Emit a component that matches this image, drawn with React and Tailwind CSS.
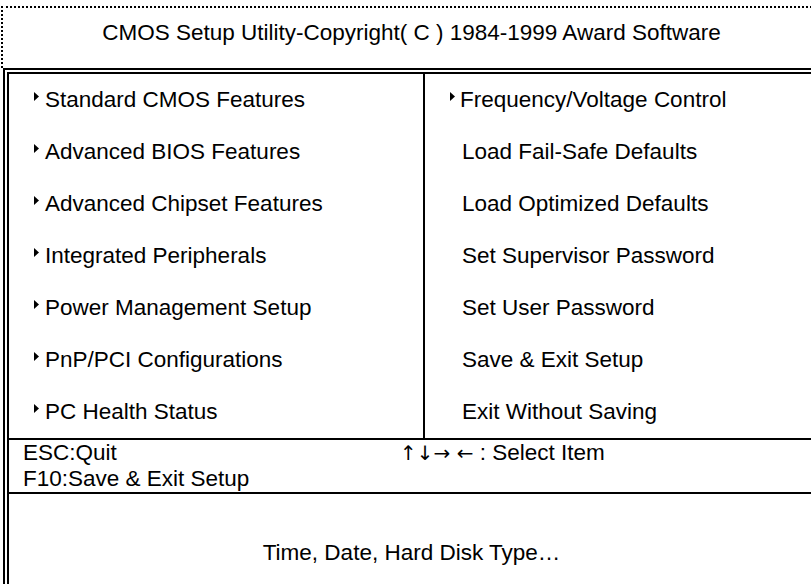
// BIOS setup main menu (Award CMOS Setup Utility)

const leftItems = [
  'Standard CMOS Features',
  'Advanced BIOS Features',
  'Advanced Chipset Features',
  'Integrated Peripherals',
  'Power Management Setup',
  'PnP/PCI Configurations',
  'PC Health Status',
];

const rightItems = [
  { label: 'Frequency/Voltage Control', sub: true },
  { label: 'Load Fail-Safe Defaults' },
  { label: 'Load Optimized Defaults' },
  { label: 'Set Supervisor Password' },
  { label: 'Set User Password' },
  { label: 'Save & Exit Setup' },
  { label: 'Exit Without Saving' },
];

// 小さな右向き三角（サブメニューあり）
function Pointer() {
  return (
    <svg width="5" height="9" viewBox="0 0 5 9" className="shrink-0 mb-[7px]">
      <polygon points="0,0 5,4.5 0,9" fill="#000" />
    </svg>
  );
}

export default function App() {
  return (
    <div
      className="w-[820px] pt-[6px] pl-[1px] bg-white text-black text-[22.5px]"
      style={{ fontFamily: '"Liberation Sans", Arial, sans-serif' }}
    >
      {/* タイトル */}
      <div className="h-[62px] border-t-2 border-l-2 border-dotted border-black flex items-center justify-center pb-[10px]">
        CMOS Setup Utility-Copyright( C ) 1984-1999 Award Software
      </div>

      <div className="ml-[2px] border-[6px] border-double border-black">
        {/* メニュー */}
        <div className="flex border-b-2 border-black">
          <div className="w-[416px] border-r-2 border-black">
            {leftItems.map((label) => (
              <div key={label} className="h-[52px] flex items-center pl-[25px] gap-[6px]">
                <Pointer />
                <span>{label}</span>
              </div>
            ))}
          </div>
          <div className="flex-1">
            {rightItems.map((it) => (
              <div key={it.label} className="h-[52px] flex items-center pl-[25px] gap-[5px]">
                {it.sub ? <Pointer /> : <span className="w-[7px]" />}
                <span>{it.label}</span>
              </div>
            ))}
          </div>
        </div>

        {/* キー操作 */}
        <div className="h-[54px] flex border-b-2 border-black pl-[14px] leading-[26px]">
          <div className="w-[377px] flex flex-col justify-center">
            <span>ESC:Quit</span>
            <span>F10:Save &amp; Exit Setup</span>
          </div>
          <div className="flex flex-col justify-center">
            <span>
              <span style={{ fontFamily: '"DejaVu Sans", sans-serif' }} className="text-[20px]">↑↓→ ←</span> : Select Item
            </span>
            <span>&nbsp;</span>
          </div>
        </div>

        {/* ヘルプ */}
        <div className="h-[118px] flex items-center justify-center">
          Time, Date, Hard Disk Type…
        </div>
      </div>
    </div>
  );
}
